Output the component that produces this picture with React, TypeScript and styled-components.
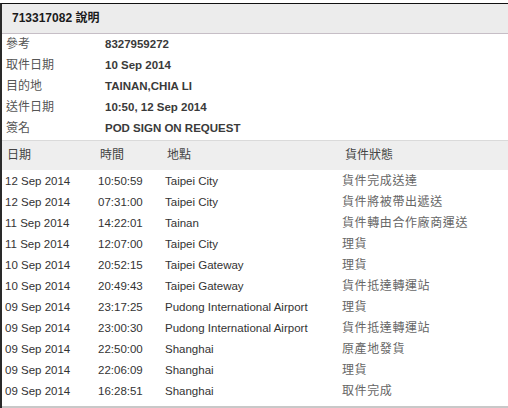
import React from "react";
import styled, { createGlobalStyle } from "styled-components";

const GlobalStyle = createGlobalStyle`
  html, body {
    margin: 0;
    padding: 0;
    background: #ffffff;
    overflow: hidden;
  }
  body {
    font-family: "Liberation Sans", Arial, "Noto Sans CJK TC", sans-serif;
    font-size: 11.5px;
    color: #333;
  }
`;

type InfoRow = { label: string; value: string };
type Event = { date: string; time: string; place: string; status: string };

const info: InfoRow[] = [
  { label: "參考", value: "8327959272" },
  { label: "取件日期", value: "10 Sep 2014" },
  { label: "目的地", value: "TAINAN,CHIA LI" },
  { label: "送件日期", value: "10:50, 12 Sep 2014" },
  { label: "簽名", value: "POD SIGN ON REQUEST" },
];

const events: Event[] = [
  { date: "12 Sep 2014", time: "10:50:59", place: "Taipei City", status: "貨件完成送達" },
  { date: "12 Sep 2014", time: "07:31:00", place: "Taipei City", status: "貨件將被帶出遞送" },
  { date: "11 Sep 2014", time: "14:22:01", place: "Tainan", status: "貨件轉由合作廠商運送" },
  { date: "11 Sep 2014", time: "12:07:00", place: "Taipei City", status: "理貨" },
  { date: "10 Sep 2014", time: "20:52:15", place: "Taipei Gateway", status: "理貨" },
  { date: "10 Sep 2014", time: "20:49:43", place: "Taipei Gateway", status: "貨件抵達轉運站" },
  { date: "09 Sep 2014", time: "23:17:25", place: "Pudong International Airport", status: "理貨" },
  { date: "09 Sep 2014", time: "23:00:30", place: "Pudong International Airport", status: "貨件抵達轉運站" },
  { date: "09 Sep 2014", time: "22:50:00", place: "Shanghai", status: "原產地發貨" },
  { date: "09 Sep 2014", time: "22:06:09", place: "Shanghai", status: "理貨" },
  { date: "09 Sep 2014", time: "16:28:51", place: "Shanghai", status: "取件完成" },
];

function App() {
  return (
    <>
      <GlobalStyle />
      <Panel>
        <TitleBar>713317082 說明</TitleBar>
        <InfoList>
          {info.map((row) => (
            <InfoLine key={row.label}>
              <InfoLabel>{row.label}</InfoLabel>
              <InfoValue>{row.value}</InfoValue>
            </InfoLine>
          ))}
        </InfoList>
        <Table>
          <HeadRow>
            <HeadCell>日期</HeadCell>
            <HeadCell>時間</HeadCell>
            <HeadCell>地點</HeadCell>
            <HeadCell $shift={3}>貨件狀態</HeadCell>
          </HeadRow>
          <Body>
            {events.map((e, i) => (
              <Row key={i}>
                <Cell>{e.date}</Cell>
                <Cell>{e.time}</Cell>
                <Cell>{e.place}</Cell>
                <StatusCell>{e.status}</StatusCell>
              </Row>
            ))}
          </Body>
        </Table>
      </Panel>
    </>
  );
}

export default App;

const Panel = styled.div`
  margin-top: 3px;
  border-top: 1px solid #111;
  border-left: 2px solid #2a2a2a;
  width: 506px;
`;

const TitleBar = styled.div`
  height: 29px;
  line-height: 29px;
  padding-left: 10px;
  background: #ececec;
  border-bottom: 1px solid #c6bec6;
  font-size: 12px;
  font-weight: 700;
  color: #1a1a1a;
`;

const InfoList = styled.div`
  display: flex;
  flex-direction: column;
`;

const InfoLine = styled.div`
  display: grid;
  grid-template-columns: 99px 1fr;
  height: 21px;
  line-height: 21px;
  padding-left: 4px;
`;

const InfoLabel = styled.span`
  font-size: 12px;
  color: #555;
`;

const InfoValue = styled.span`
  font-weight: 700;
  color: #3a3a3a;
`;

const Table = styled.div`
  margin-top: 1px;
  display: flex;
  flex-direction: column;
`;

const columns = `93px 67px 177px 1fr`;

const HeadRow = styled.div`
  display: grid;
  grid-template-columns: ${columns};
  height: 29px;
  line-height: 29px;
  padding-left: 3px;
  background: #eeeeee;
  border-top: 1px solid #dadada;
  font-size: 12px;
`;

const HeadCell = styled.span<{ $shift?: number }>`
  padding-left: ${(p) => p.$shift ?? 2}px;
  color: #444;
`;

const Body = styled.div`
  padding-top: 1px;
  padding-bottom: 4px;
  border-bottom: 2px solid #c8c8c8;
`;

const Row = styled.div`
  display: grid;
  grid-template-columns: ${columns};
  height: 21px;
  line-height: 21px;
  padding-left: 3px;
`;

const Cell = styled.span`
  color: #333;
  white-space: nowrap;
`;

const StatusCell = styled.span`
  font-size: 12px;
  color: #666;
  letter-spacing: 0.6px;
  white-space: nowrap;
`;
